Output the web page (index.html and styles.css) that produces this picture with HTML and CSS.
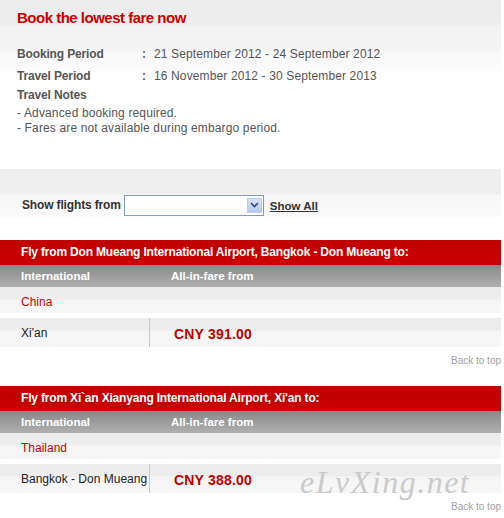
FILE: index.html
```html
<!DOCTYPE html>
<html>
<head>
<meta charset="utf-8">
<link rel="stylesheet" href="styles.css">
</head>
<body>
<div class="page">
  <div class="intro">
    <h1 class="title">Book the lowest fare now</h1>
    <div class="info">
      <div class="info-row"><span class="label">Booking Period</span><span class="colon">:</span><span class="value">21 September 2012 - 24 September 2012</span></div>
      <div class="info-row short"><span class="label">Travel Period</span><span class="colon">:</span><span class="value">16 November 2012 - 30 September 2013</span></div>
      <div class="info-row short"><span class="label">Travel Notes</span></div>
      <div class="note">- Advanced booking required.</div>
      <div class="note">- Fares are not available during embargo period.</div>
    </div>
  </div>

  <div class="filter">
    <span class="filter-label">Show flights from</span>
    <span class="select"><span class="select-btn"><svg width="9" height="6" viewBox="0 0 9 6"><path d="M1 1 L4.5 4.5 L8 1" fill="none" stroke="#2b4a8a" stroke-width="1.6"/></svg></span></span>
    <a class="show-all">Show All</a>
  </div>

  <div class="route">
    <div class="route-head">Fly from Don Mueang International Airport, Bangkok - Don Mueang to:</div>
    <div class="col-head"><span class="c1">International</span><span class="c2">All-in-fare from</span></div>
    <div class="country">China</div>
    <div class="fare-row"><span class="city">Xi'an</span><span class="price">CNY 391.00</span></div>
    <div class="back">Back to top</div>
  </div>

  <div class="route second">
    <div class="route-head">Fly from Xi`an Xianyang International Airport, Xi'an to:</div>
    <div class="col-head"><span class="c1">International</span><span class="c2">All-in-fare from</span></div>
    <div class="country">Thailand</div>
    <div class="fare-row"><span class="city">Bangkok - Don Mueang</span><span class="price">CNY 388.00</span></div>
    <div class="back">Back to top</div>
  </div>
  <div class="watermark">eLvXing.net</div>
</div>
</body>
</html>
```
FILE: styles.css
```css
html, body { margin: 0; padding: 0; background: #fff; }
body { font-family: "Liberation Sans", Arial, sans-serif; }
.page { width: 501px; position: relative; }

.intro {
  background: linear-gradient(#ececec 0, #eeeeee 25px, #f3f3f3 26px, #f4f4f4 51px, #f9f9f9 52px, #fbfbfb 70px, #fff 73px);
  padding: 9px 0 0 17px;
  height: 161px;
  box-sizing: border-box;
}
.title {
  margin: 0;
  font-size: 15px;
  line-height: 18px;
  color: #cc0000;
  font-weight: bold;
  letter-spacing: -0.5px;
}
.info { margin-top: 19px; font-size: 12px; color: #555; }
.info-row { display: flex; height: 22px; line-height: 16px; }
.info-row.short { height: 19px; }
.label { width: 125px; font-weight: bold; letter-spacing: -0.15px; }
.colon { width: 12px; font-weight: bold; }
.value { letter-spacing: 0.13px; }
.note { line-height: 15px; letter-spacing: 0.14px; }

.filter {
  margin-top: 8px;
  height: 51px;
  background: linear-gradient(#efefef 0, #eeeeee 24px, #f7f7f7 26px, #fafafa 45px, #fff 51px);
  display: flex;
  align-items: center;
  padding: 21px 0 0 22px;
  box-sizing: border-box;
  font-size: 12px;
}
.filter-label { font-weight: bold; color: #333; margin-right: 3px; letter-spacing: -0.15px; }
.select {
  width: 136px; height: 17px;
  border: 1px solid #7f9db9;
  background: #fff;
  display: flex; justify-content: flex-end; align-items: center;
  padding: 1px;
}
.select-btn {
  width: 15px; height: 15px;
  background: linear-gradient(#d6e2f8, #b5c9ef);
  border: 1px solid #b9ccf0;
  box-sizing: border-box;
  display: flex; align-items: center; justify-content: center;
}
.show-all {
  margin-left: 6px;
  font-weight: bold; color: #333;
  text-decoration: underline;
  font-size: 11.5px;
  position: relative; top: 1px;
}

.route { margin-top: 20px; }
.route.second { margin-top: 19px; }
.route-head {
  height: 25px;
  background: linear-gradient(#bf0000, #cc0000);
  color: #fff;
  font-weight: bold;
  font-size: 12px;
  letter-spacing: -0.18px;
  line-height: 25px;
  padding-left: 21px;
}
.col-head {
  height: 22px;
  background: linear-gradient(#888888, #b0b0b0);
  color: #fff;
  font-size: 11.5px;
  font-weight: bold;
  line-height: 22px;
  display: flex;
  padding-left: 21px;
}
.col-head .c1 { width: 150px; }
.country {
  height: 26px;
  background: linear-gradient(#ececec 0, #eeeeee 12px, #f6f6f6 13px, #f7f7f7 100%);
  color: #cc0000;
  font-size: 12px;
  line-height: 31px;
  padding-left: 21px;
}
.fare-row {
  margin-top: 5px;
  height: 29px;
  background: linear-gradient(#ececec 0, #ededed 12px, #f5f5f5 13px, #f7f7f7 100%);
  display: flex;
  align-items: center;
}
.city {
  width: 150px; height: 29px;
  box-sizing: border-box;
  border-right: 1px solid #c8c8c8;
  padding-left: 21px;
  font-size: 12px;
  color: #222;
  line-height: 31px;
}
.price {
  padding: 2px 0 0 24px;
  color: #c00000;
  font-weight: bold;
  font-size: 14px;
  letter-spacing: 0.2px;
}
.back {
  text-align: right;
  font-size: 10px;
  color: #a0a0a0;
  margin-top: 8px;
  line-height: 12px;
}
.watermark {
  position: absolute;
  left: 300px; top: 466px;
  font-family: "Liberation Serif", serif;
  font-style: italic;
  font-size: 32px;
  line-height: 32px;
  color: #cacaca;
  letter-spacing: 1.5px;
}
```
